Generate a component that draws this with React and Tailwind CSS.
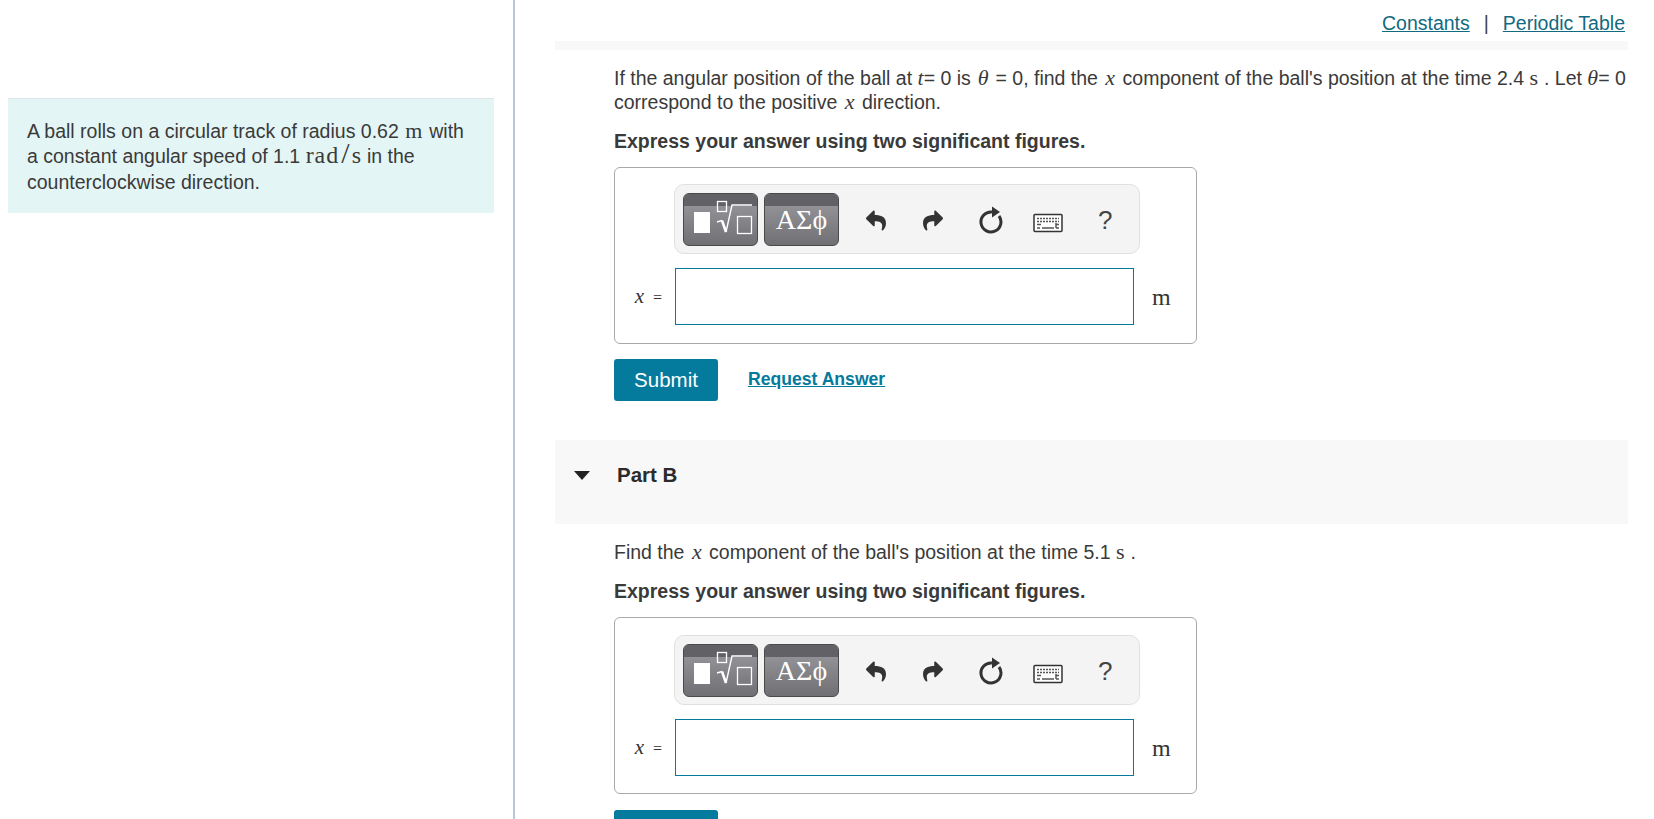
import { FaReply, FaShare } from 'react-icons/fa';

function M({ children, italic = false, className = '' }) {
  return (
    <span className={`font-['Liberation_Serif',serif] text-[22px] leading-[0] ${italic ? 'italic' : 'tracking-[0.5px]'} ${className}`}>{children}</span>
  );
}

function TemplatesIcon() {
  return (
    <svg width="73" height="51" viewBox="0 0 73 51" fill="none" className="block">
      <rect x="10" y="18" width="16" height="21" fill="#fff" />
      <path d="M33 28 L38 26.5" stroke="#fff" strokeWidth="1.5" />
      <path d="M38 26.5 L42 38" stroke="#fff" strokeWidth="2.6" />
      <path d="M42 38 L48 11 H68" stroke="#fff" strokeWidth="1.4" />
      <rect x="33.5" y="7.5" width="9" height="10" stroke="#fff" strokeWidth="1.3" />
      <rect x="53.5" y="22.5" width="14" height="17" stroke="#fff" strokeWidth="1.3" />
    </svg>
  );
}

function ResetIcon() {
  return (
    <svg width="26" height="28" viewBox="0 0 26 28" fill="none">
      <path d="M20 10 A10 10 0 1 1 13 6" stroke="#333" strokeWidth="3" />
      <path d="M13 0.5 L21 6 L13 11.5 Z" fill="#333" />
    </svg>
  );
}

function KeyboardIcon() {
  return (
    <svg width="30" height="20" viewBox="0 0 30 20" fill="none">
      <rect x="1" y="1.5" width="28" height="17" rx="1" stroke="#333" strokeWidth="1.5" fill="#fff" />
      <path d="M4 5.5h22M4 8.5h22" stroke="#555" strokeWidth="1.6" strokeDasharray="2 1" />
      <path d="M4 11.5h4M23 11.5h3M4 15h3M9 15h12M23 15h3M23 10v5" stroke="#555" strokeWidth="1.5" />
    </svg>
  );
}

function PaletteButton({ children, className = '' }) {
  return (
    <div className={`relative h-[53px] w-[75px] overflow-hidden rounded-[6px] border border-[#4a4a4a] bg-gradient-to-b from-[#9c9ca1] to-[#6f6f74] ${className}`}>
      <div className="absolute inset-x-0 top-0 h-[12px] bg-[#626266]" />
      <div className="relative flex h-full items-center justify-center">{children}</div>
    </div>
  );
}

function AnswerBox({ pad = 'pt-4 pb-[18px]' }) {
  return (
    <div className={`mt-[14px] w-[583px] rounded-[6px] border border-[#a9a9a9] ${pad}`}>
      <div className="ml-[59px] flex h-[70px] w-[466px] items-center rounded-[10px] border border-[#e0e0e0] bg-[#f4f4f4] pl-2">
        <PaletteButton>
          <TemplatesIcon />
        </PaletteButton>
        <PaletteButton className="ml-[6px]">
          <span className="pt-[1px] font-['Liberation_Serif',serif] text-[28px] leading-none text-white">ΑΣϕ</span>
        </PaletteButton>
        <div className="ml-[27px] mt-[2px] text-[#333]">
          <FaReply className="h-[23px] w-[20px]" preserveAspectRatio="none" />
        </div>
        <div className="ml-[37px] mt-[2px] text-[#333]">
          <FaShare className="h-[23px] w-[20px]" preserveAspectRatio="none" />
        </div>
        <div className="ml-[36px] mt-[2px] flex"><ResetIcon /></div>
        <div className="ml-[28px] mt-[8px] flex"><KeyboardIcon /></div>
        <div className="ml-[35px] mt-[2px] text-[26px] leading-none text-[#444]">?</div>
      </div>
      <div className="mt-[14px] flex items-center">
        <div className="w-[60px] pr-[13px] text-right text-[16px] leading-none text-[#333]">
          <span className="pr-[5px] font-['Liberation_Serif',serif] text-[21px] italic">x</span>
          <span className="font-['Liberation_Serif',serif]"> =</span>
        </div>
        <div className="h-[57px] w-[459px] border border-[#047a9c] bg-white" />
        <div className="ml-[18px] font-['Liberation_Serif',serif] text-[24px] text-[#333]">m</div>
      </div>
    </div>
  );
}

function SubmitButton({ mt = 'mt-4', showLink = true }) {
  return (
    <div className={`flex items-center ${mt}`}>
      <div className="flex h-[42px] w-[104px] items-center justify-center rounded-[3px] bg-[#047a9c] text-[20.5px] text-white">Submit</div>
      {showLink && <a className="ml-[30px] -translate-y-[1px] text-[17.6px] font-bold text-[#047a9c] underline">Request Answer</a>}
    </div>
  );
}

export default function App() {
  return (
    <div className="flex h-[819px] overflow-hidden bg-white font-['Liberation_Sans',Arial,sans-serif] text-[19.5px] leading-[24px] text-[#3a3a3a]">
      <div className="w-[515px] shrink-0 border-r-2 border-[#b7c8da] pl-2 pt-[98px]">
        <div className="h-[115px] w-[486px] border-t border-[#dde3e6] bg-[#e4f5f6] px-[19px] pt-5 leading-[25.3px]">
          A ball rolls on a circular track of radius 0.62 <M className="px-[1px]">m</M> with
          <br />
          a constant angular speed of 1.1{' '}
          <M className="text-[24px] tracking-[1px]">rad</M>
          <M className="mx-[2px] text-[30px] tracking-normal">/</M>
          <M className="text-[24px]">s</M> in the
          <br />
          counterclockwise direction.
        </div>
      </div>

      <div className="min-w-0 flex-1">
        <div className="flex h-[41px] items-center justify-end pr-[29px] pt-[5px] text-[#116a80]">
          <a className="underline">Constants</a>
          <span className="mx-[14px] text-[#444]">|</span>
          <a className="underline">Periodic Table</a>
        </div>
        <div className="ml-[40px] mr-[26px] h-[9px] bg-[#f8f8f8]" />

        <div className="ml-[99px] mt-4 whitespace-nowrap">
          <p>
            If the angular position of the ball at <M italic>t</M>= 0 is <M italic className="px-[1.5px]">θ</M> = 0, find the <M italic className="px-[2px]">x</M> component of the ball's position at the time 2.4 <M>s</M> . Let <M italic>θ</M>= 0
            <br />
            correspond to the positive <M italic className="px-[2px]">x</M> direction.
          </p>
          <p className="mt-[15px] font-bold">Express your answer using two significant figures.</p>
          <AnswerBox />
          <SubmitButton mt="mt-[15px]" />
        </div>

        <div className="ml-[40px] mr-[26px] mt-[39px] flex h-[84px] items-start bg-[#f8f8f8] pt-[23px]">
          <div className="ml-[19px] mt-[8px] h-0 w-0 border-x-[8px] border-t-[9px] border-x-transparent border-t-[#222]" />
          <div className="ml-[27px] text-[20.5px] font-bold text-[#2b2b2b]">Part B</div>
        </div>

        <div className="ml-[99px] mt-4 whitespace-nowrap">
          <p>
            Find the <M italic className="px-[2px]">x</M> component of the ball's position at the time 5.1 <M>s</M> .
          </p>
          <p className="mt-[15px] font-bold">Express your answer using two significant figures.</p>
          <AnswerBox pad="pt-[17px] pb-[17px]" />
          <SubmitButton showLink={false} />
        </div>
      </div>
    </div>
  );
}
